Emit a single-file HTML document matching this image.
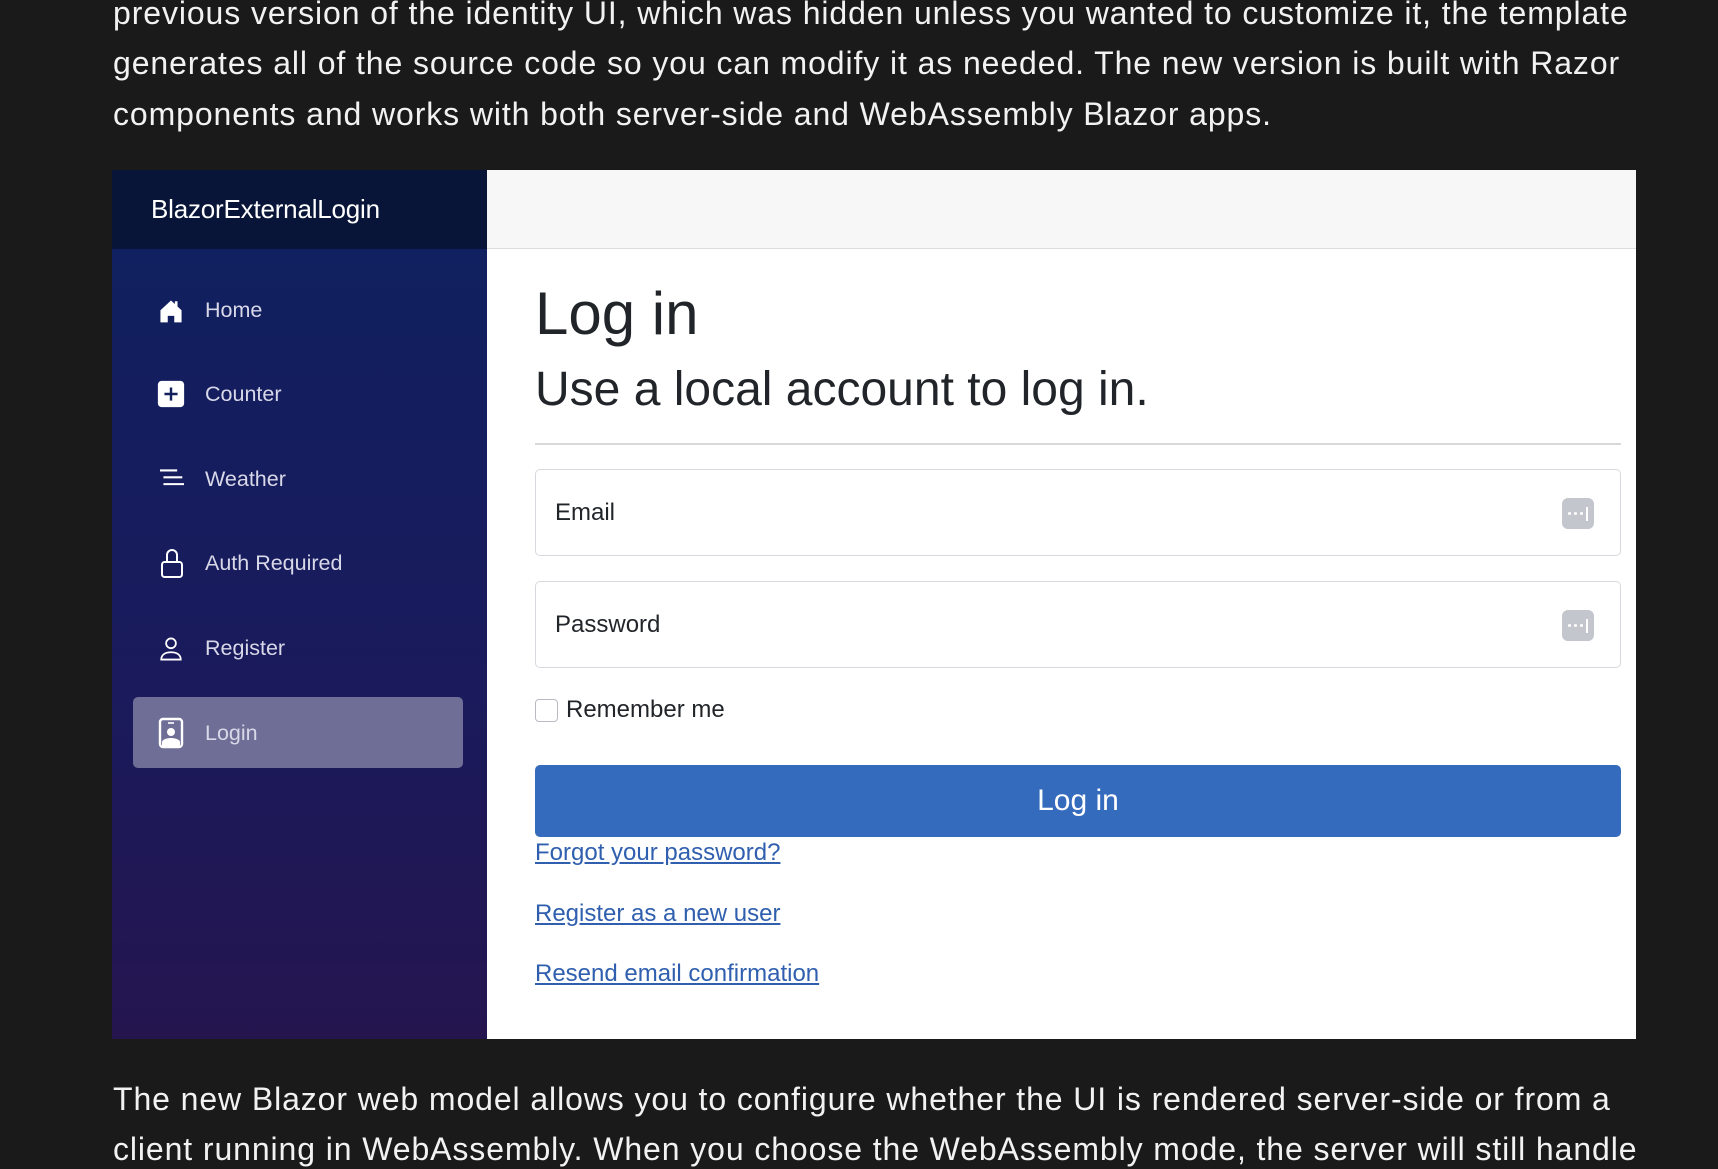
<!DOCTYPE html>
<html><head><meta charset="utf-8"><style>
*{margin:0;padding:0;box-sizing:border-box}
body{width:1718px;height:1166px;background:#1a1a1a;position:relative;overflow:hidden;font-family:"Liberation Sans",Arial,sans-serif}
.p{position:absolute;left:113px;color:#f2f2f2;font-size:32px;letter-spacing:0.9px;white-space:nowrap;line-height:40px}
.shot{position:absolute;left:112px;top:170px;width:1524px;height:869px;background:#fff;overflow:hidden}
.side{position:absolute;left:0;top:0;width:375px;height:869px;background:linear-gradient(180deg,#0f2160 0%,#1a1a5c 60%,#25154f 100%)}
.brand{position:absolute;left:0;top:0;width:375px;height:79px;background:#081538;color:#fff;font-size:26px;line-height:79px;padding-left:39px;letter-spacing:-0.2px}
.nav{position:absolute;left:0;width:375px;height:40px;color:#d8d8e8;font-size:21.5px;line-height:40px}
.nav span{position:absolute;left:93px}
.nav svg{position:absolute;left:46px;top:8px}
.act{position:absolute;left:21px;top:527px;width:330px;height:71px;background:#6e6e96;border-radius:5px}
.top{position:absolute;left:375px;top:0;width:1149px;height:79px;background:#f7f7f7;border-bottom:1px solid #ddd}
.m{position:absolute;color:#212529;white-space:nowrap}
.inp{position:absolute;left:423px;width:1086px;height:87px;border:1px solid #d6d9dd;border-radius:5px}
.inp span{position:absolute;left:19px;top:0;line-height:85px;font-size:24px;color:#212529}
.inp i{position:absolute;right:26px;top:28px;width:32px;height:31px;background:#c3c6cc;border-radius:6px}
.inp i b{position:absolute;left:6px;top:14px;width:3px;height:3px;background:#fff;border-radius:50%;box-shadow:6px 0 #fff,12px 0 #fff}
.inp i em{position:absolute;left:24px;top:9px;width:2px;height:14px;background:#fff}
.lk{position:absolute;left:423px;color:#2f5fae;font-size:24px;text-decoration:underline;white-space:nowrap}
</style></head><body>
<div class="p" style="top:-7px">previous version of the identity UI, which was hidden unless you wanted to customize it, the template</div>
<div class="p" style="top:43px">generates all of the source code so you can modify it as needed. The new version is built with Razor</div>
<div class="p" style="top:94px">components and works with both server-side and WebAssembly Blazor apps.</div>

<div class="shot">
 <div class="side">
  <div class="brand">BlazorExternalLogin</div>
  <div class="act"></div>
  <div class="nav" style="top:120px"><svg width="26" height="26" viewBox="0 0 16 16"><path fill="#fff" d="M8 1.5 1.5 7.5V15h4.5v-4h4v4h4.5V7.5L12 5.2V2h-1.6v1.7z"/></svg><span>Home</span></div>
  <div class="nav" style="top:204px"><svg width="30" height="30" viewBox="0 0 16 16" style="top:5px;left:44px"><rect x="1" y="1" width="14" height="14" rx="2" fill="#fff"/><path d="M8 4.5v7M4.5 8h7" stroke="#14205c" stroke-width="1.3"/></svg><span>Counter</span></div>
  <div class="nav" style="top:289px"><svg width="28" height="24" viewBox="0 0 16 14"><path d="M1 2h10M3 6h11M3 10h12" stroke="#fff" stroke-width="1.2"/></svg><span>Weather</span></div>
  <div class="nav" style="top:373px"><svg width="24" height="32" viewBox="0 0 12 16" style="top:4px;left:48px"><rect x="1" y="7.5" width="10" height="7.5" rx="1.3" fill="none" stroke="#fff" stroke-width="1"/><path d="M3.5 7.5V4a2.5 2.5 0 0 1 5 0v3.5" fill="none" stroke="#fff" stroke-width="1"/></svg><span>Auth Required</span></div>
  <div class="nav" style="top:458px"><svg width="26" height="26" viewBox="0 0 16 16"><circle cx="8" cy="4.5" r="3" fill="none" stroke="#fff" stroke-width="1.1"/><path d="M2 14.5c0-3 2.5-4.5 6-4.5s6 1.5 6 4.5z" fill="none" stroke="#fff" stroke-width="1.1"/></svg><span>Register</span></div>
  <div class="nav" style="top:543px"><svg width="26" height="32" viewBox="0 0 13 16" style="top:4px"><rect x="1" y="1" width="11" height="14" rx="1.5" fill="none" stroke="#fff" stroke-width="1.2"/><circle cx="6.5" cy="7.5" r="2" fill="#fff"/><path d="M2 15v-2.5c0-1 2-2 4.5-2s4.5 1 4.5 2V15z" fill="#fff"/><path d="M5 3h3" stroke="#fff" stroke-width=".8"/></svg><span>Login</span></div>
 </div>
 <div class="top"></div>
 <div class="m" style="left:423px;top:108px;font-size:60px;line-height:72px">Log in</div>
 <div class="m" style="left:423px;top:191px;font-size:48px;line-height:58px">Use a local account to log in.</div>
 <div style="position:absolute;left:423px;top:273px;width:1086px;height:2px;background:#d8d8d8"></div>
 <div class="inp" style="top:299px"><span>Email</span><i><b></b><em></em></i></div>
 <div class="inp" style="top:411px"><span>Password</span><i><b></b><em></em></i></div>
 <div style="position:absolute;left:423px;top:529px;width:23px;height:23px;border:1px solid #b8bcc2;border-radius:4px"></div>
 <div class="m" style="left:454px;top:524px;font-size:24px;line-height:32px">Remember me</div>
 <div style="position:absolute;left:423px;top:595px;width:1086px;height:72px;background:#356bbd;border-radius:5px;color:#fff;font-size:30px;line-height:72px;text-align:center">Log in</div>
 <div class="lk" style="top:669px">Forgot your password?</div>
 <div class="lk" style="top:730px">Register as a new user</div>
 <div class="lk" style="top:790px">Resend email confirmation</div>
</div>

<div class="p" style="top:1079px">The new Blazor web model allows you to configure whether the UI is rendered server-side or from a</div>
<div class="p" style="top:1129px">client running in WebAssembly. When you choose the WebAssembly mode, the server will still handle</div>
</body></html>
